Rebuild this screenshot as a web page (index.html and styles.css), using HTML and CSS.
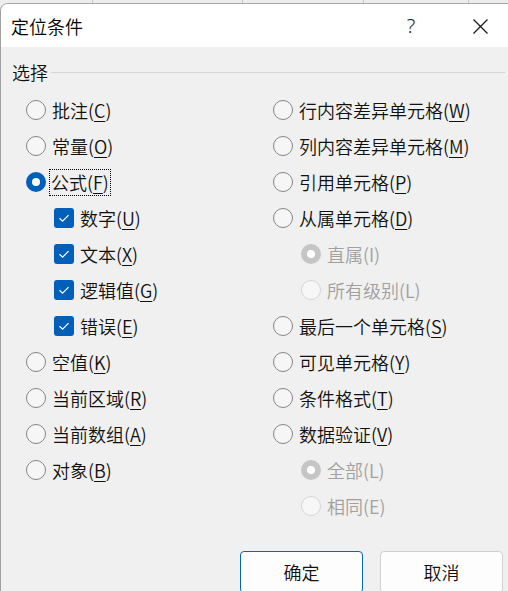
FILE: index.html
```html
<!DOCTYPE html>
<html lang="zh-CN">
<head>
<meta charset="utf-8">
<title>定位条件</title>
<link rel="stylesheet" href="styles.css">
</head>
<body>
<div class="sheet-strip">
  <span class="gl gl1"></span><span class="gl gl2"></span><span class="gl gl3"></span><span class="gl gl4"></span>
</div>
<div class="window">
  <div class="titlebar">
    <div class="title">定位条件</div>
    <div class="help">?</div>
    <svg class="close" width="15" height="15" viewBox="0 0 15 15"><path d="M0.5 0.5 L14.5 14.5 M14.5 0.5 L0.5 14.5" stroke="#1a1a1a" stroke-width="1.3" fill="none"/></svg>
  </div>
  <div class="content">
    <div class="group-head"><span class="legend">选择</span><span class="rule"></span></div>
    <div class="cols">
      <div class="col">
        <div class="item"><span class="radio"></span><span class="lbl">批注(<u>C</u>)</span></div>
        <div class="item"><span class="radio"></span><span class="lbl">常量(<u>O</u>)</span></div>
        <div class="item"><span class="radio on"></span><span class="lbl focus">公式(<u>F</u>)</span></div>
        <div class="item sub"><span class="check"><svg width="20" height="20" viewBox="0 0 20 20"><path d="M5.5 10.2 L8.6 13.2 L14.6 7.2" stroke="#fff" stroke-width="1.2" fill="none"/></svg></span><span class="lbl">数字(<u>U</u>)</span></div>
        <div class="item sub"><span class="check"><svg width="20" height="20" viewBox="0 0 20 20"><path d="M5.5 10.2 L8.6 13.2 L14.6 7.2" stroke="#fff" stroke-width="1.2" fill="none"/></svg></span><span class="lbl">文本(<u>X</u>)</span></div>
        <div class="item sub"><span class="check"><svg width="20" height="20" viewBox="0 0 20 20"><path d="M5.5 10.2 L8.6 13.2 L14.6 7.2" stroke="#fff" stroke-width="1.2" fill="none"/></svg></span><span class="lbl">逻辑值(<u>G</u>)</span></div>
        <div class="item sub"><span class="check"><svg width="20" height="20" viewBox="0 0 20 20"><path d="M5.5 10.2 L8.6 13.2 L14.6 7.2" stroke="#fff" stroke-width="1.2" fill="none"/></svg></span><span class="lbl">错误(<u>E</u>)</span></div>
        <div class="item"><span class="radio"></span><span class="lbl">空值(<u>K</u>)</span></div>
        <div class="item"><span class="radio"></span><span class="lbl">当前区域(<u>R</u>)</span></div>
        <div class="item"><span class="radio"></span><span class="lbl">当前数组(<u>A</u>)</span></div>
        <div class="item"><span class="radio"></span><span class="lbl">对象(<u>B</u>)</span></div>
      </div>
      <div class="col">
        <div class="item"><span class="radio"></span><span class="lbl">行内容差异单元格(<u>W</u>)</span></div>
        <div class="item"><span class="radio"></span><span class="lbl">列内容差异单元格(<u>M</u>)</span></div>
        <div class="item"><span class="radio"></span><span class="lbl">引用单元格(<u>P</u>)</span></div>
        <div class="item"><span class="radio"></span><span class="lbl">从属单元格(<u>D</u>)</span></div>
        <div class="item sub disabled"><span class="radio on"></span><span class="lbl">直属(I)</span></div>
        <div class="item sub disabled"><span class="radio"></span><span class="lbl">所有级别(L)</span></div>
        <div class="item"><span class="radio"></span><span class="lbl">最后一个单元格(<u>S</u>)</span></div>
        <div class="item"><span class="radio"></span><span class="lbl">可见单元格(<u>Y</u>)</span></div>
        <div class="item"><span class="radio"></span><span class="lbl">条件格式(<u>T</u>)</span></div>
        <div class="item"><span class="radio"></span><span class="lbl">数据验证(<u>V</u>)</span></div>
        <div class="item sub disabled"><span class="radio on"></span><span class="lbl">全部(L)</span></div>
        <div class="item sub disabled"><span class="radio"></span><span class="lbl">相同(E)</span></div>
      </div>
    </div>
    <div class="buttons">
      <button class="btn primary">确定</button>
      <button class="btn">取消</button>
    </div>
  </div>
</div>
</body>
</html>
```

FILE: styles.css
```css
html, body {
  margin: 0;
  padding: 0;
  overflow: hidden;
  height: 591px;
  background: #f0f0f0;
}
body {
  font-family: "Noto Sans CJK SC", "Noto Sans", sans-serif;
  font-weight: 350;
  color: #111111;
  font-size: 18px;
}
.sheet-strip {
  height: 3px;
  background: #ececec;
  position: relative;
}
.gl {
  position: absolute;
  top: 0;
  width: 1px;
  height: 3px;
  background: #c6c6c6;
}
.gl1 { left: 92px; }
.gl2 { left: 242px; }
.gl3 { left: 363px; }
.gl4 { left: 468px; }
.window {
  box-sizing: border-box;
  width: 520px;
  height: 588px;
  border-top: 1px solid #a9a9a9;
  border-left: 1px solid #a0a0a0;
  border-top-left-radius: 8px;
  overflow: hidden;
  background: #f0f0f0;
}
.titlebar {
  height: 43px;
  background: #ffffff;
  display: flex;
  align-items: center;
  padding-left: 10px;
  padding-right: 32px;
}
.title {
  flex: 1;
  font-size: 18px;
  line-height: 24px;
  color: #000;
  margin-top: 1px;
}
.help {
  width: 30px;
  text-align: center;
  font-family: "Noto Sans", sans-serif;
  font-weight: 300;
  font-size: 20px;
  line-height: 24px;
  color: #1a1a1a;
}
.close {
  margin-left: 47px;
  margin-top: 2px;
  display: block;
}
.group-head {
  display: flex;
  align-items: center;
  height: 24px;
  margin-top: 13px;
  padding-left: 11px;
  padding-right: 15px;
}
.legend {
  line-height: 24px;
}
.rule {
  flex: 1;
  height: 1px;
  background: #d6d6d6;
  margin-left: 3px;
}
.cols {
  display: grid;
  grid-template-columns: 247px 1fr;
  padding-left: 25px;
  margin-top: 8px;
}
.col {
  display: flex;
  flex-direction: column;
}
.item {
  height: 36px;
  display: flex;
  align-items: center;
  gap: 6px;
}
.item.sub {
  padding-left: 28px;
}
.lbl {
  line-height: 24px;
  white-space: nowrap;
}
.lbl u {
  text-decoration-thickness: 1px;
  text-underline-offset: 3px;
}
.lbl.focus {
  border: 1px dotted #000;
  padding: 0 1px;
  margin-left: -3px;
  line-height: 25px;
}
.radio {
  box-sizing: border-box;
  width: 20px;
  height: 20px;
  border-radius: 50%;
  border: 1px solid #858585;
  background: #f6f6f6;
  flex: none;
  display: flex;
  align-items: center;
  justify-content: center;
}
.radio.on {
  border: none;
  background: #005fb8;
}
.radio.on::after {
  content: "";
  width: 8px;
  height: 8px;
  border-radius: 50%;
  background: #ffffff;
}
.check {
  box-sizing: border-box;
  width: 20px;
  height: 20px;
  border-radius: 3px;
  background: #005fb8;
  flex: none;
  display: block;
}
.check svg {
  display: block;
}
.disabled .lbl {
  color: #a0a0a0;
}
.disabled .radio {
  border-color: #d5d5d5;
  background: #f7f7f7;
}
.disabled .radio.on {
  background: #c5c5c5;
  border: none;
}
.buttons {
  display: flex;
  gap: 17px;
  padding-left: 239px;
  margin-top: 27px;
}
.btn {
  box-sizing: border-box;
  width: 123px;
  height: 42px;
  border-radius: 4px;
  border: 1px solid #d0d0d0;
  background: #fdfdfd;
  font-family: "Noto Sans CJK SC", sans-serif;
  font-weight: 350;
  font-size: 18px;
  color: #111111;
  padding: 0;
  line-height: 24px;
}
.btn.primary {
  border-color: #0067c0;
}
```
